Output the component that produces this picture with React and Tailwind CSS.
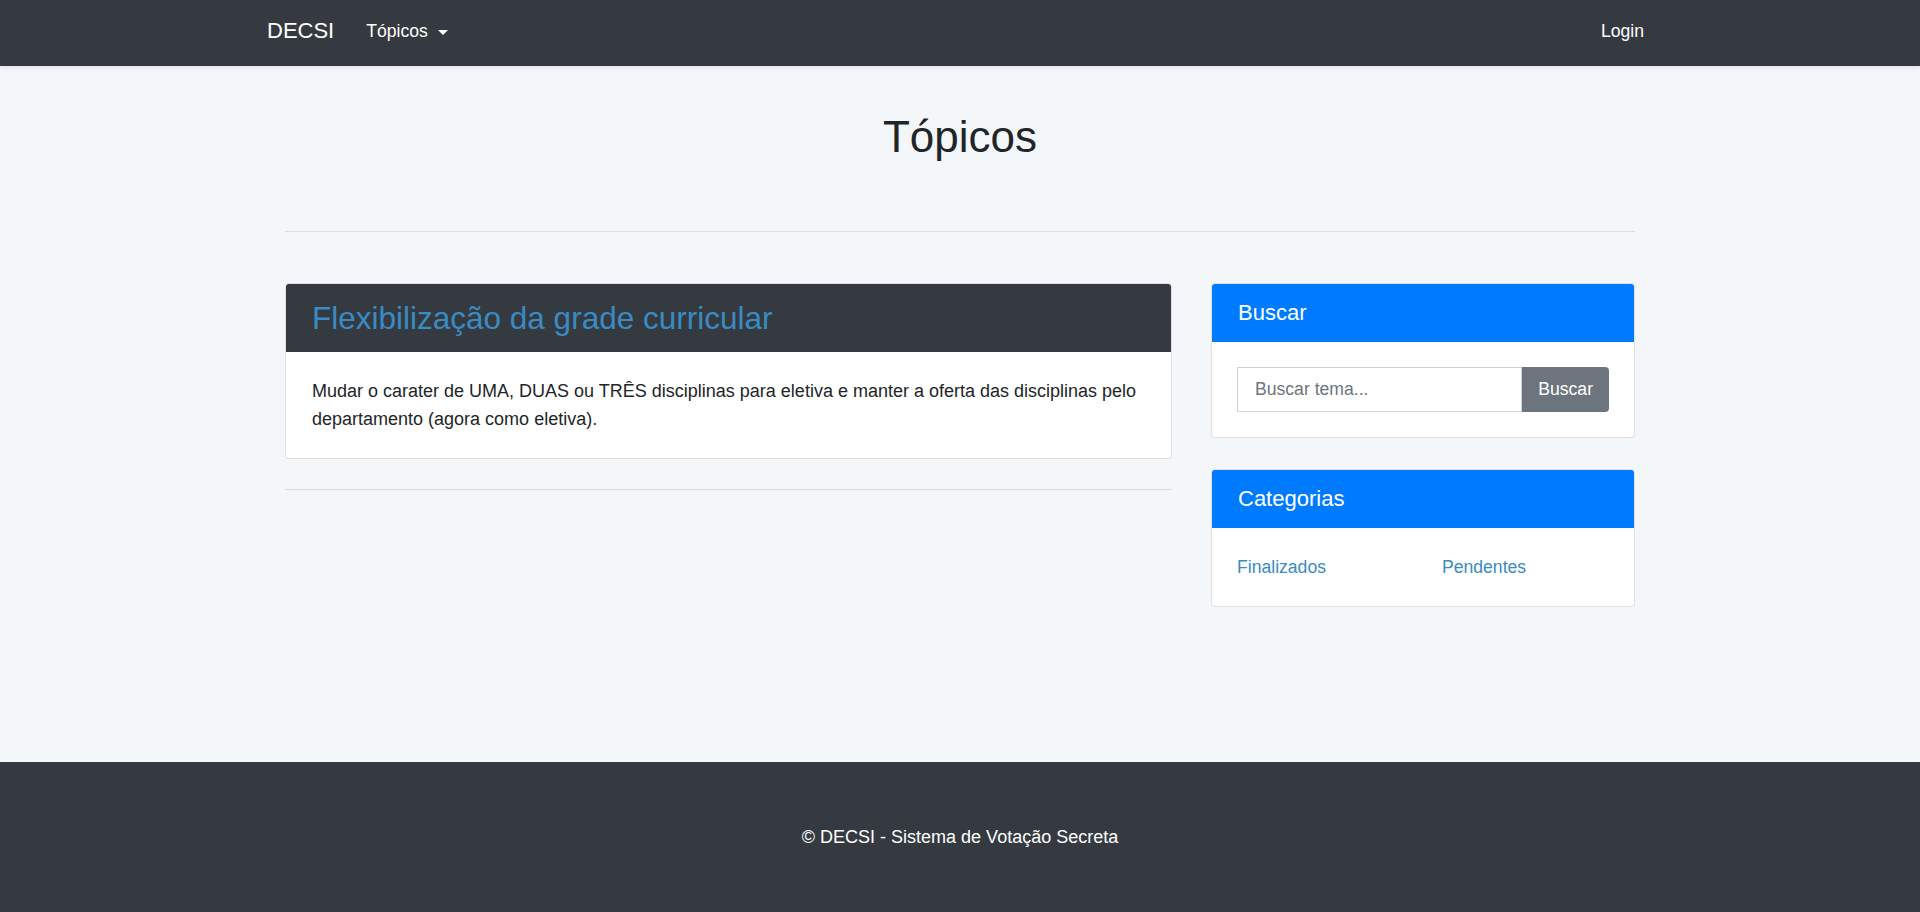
const linkColor = 'text-[#3a8bc3]'

function Navbar() {
  return (
    <nav className="h-[66px] bg-[#343a40] shadow-[0_2px_4px_rgba(0,0,0,0.08)]">
      <div className="mx-auto flex h-full w-[1386px] items-center justify-between pb-[4px]">
        <div className="flex items-center">
          <a className="mr-[23px] text-[22px] leading-[26px] text-white">DECSI</a>
          <a className="flex items-center gap-[10px] px-[9px] text-[17.6px] leading-[26px] text-white">
            Tópicos
            <span className="mt-[2px] h-0 w-0 border-x-[5px] border-t-[5px] border-x-transparent border-t-white" />
          </a>
        </div>
        <a className="px-[9px] text-[17.6px] leading-[26px] text-white">Login</a>
      </div>
    </nav>
  )
}

function SideCard({ title, children }) {
  return (
    <div className="overflow-hidden rounded-[4px] border border-black/[0.12] bg-white">
      <div className="bg-[#007bff] px-[26px] py-[16px] text-[22px] leading-[26px] text-white">{title}</div>
      <div className="px-[25px] py-[25px]">{children}</div>
    </div>
  )
}

export default function App() {
  return (
    <div className="flex min-h-screen flex-col bg-[#f4f7fa] font-['Liberation_Sans',Arial,sans-serif] text-[#212529]">
      <Navbar />

      <main className="flex-1">
        <div className="mx-auto w-[1350px]">
          <h1 className="mt-[44px] text-center text-[44px] leading-[53px] font-normal">Tópicos</h1>
          <hr className="mt-[68px] border-t border-black/10" />

          <div className="mt-[51px] grid grid-cols-[887px_424px] gap-x-[39px]">
            <section>
              <article className="overflow-hidden rounded-[4px] border border-black/[0.12] bg-white">
                <div className="bg-[#343a40] px-[26px] pt-[16px] pb-[15px]">
                  <h3 className={`text-[31.5px] leading-[37px] ${linkColor}`}>Flexibilização da grade curricular</h3>
                </div>
                <div className="px-[26px] py-[25px] text-[18px] leading-[28px]">
                  Mudar o carater de UMA, DUAS ou TRÊS disciplinas para eletiva e manter a oferta das disciplinas pelo
                  departamento (agora como eletiva).
                </div>
              </article>
              <hr className="mt-[30px] border-t border-black/10" />
            </section>

            <aside className="flex flex-col gap-[31px]">
              <SideCard title="Buscar">
                <form className="flex" onSubmit={(e) => e.preventDefault()}>
                  <input
                    className="h-[45px] flex-1 border border-[#ced4da] bg-white px-[17px] text-[17.6px] text-[#495057] outline-none placeholder:text-[#6c757d]"
                    placeholder="Buscar tema..."
                  />
                  <button className="h-[45px] rounded-r-[4px] bg-[#6c757d] px-[16px] text-[17.6px] text-white">
                    Buscar
                  </button>
                </form>
              </SideCard>

              <SideCard title="Categorias">
                <ul className="grid grid-cols-[205px_1fr] text-[17.6px] leading-[28px]">
                  <li className={linkColor}>Finalizados</li>
                  <li className={linkColor}>Pendentes</li>
                </ul>
              </SideCard>
            </aside>
          </div>
        </div>
      </main>

      <footer className="flex h-[150px] items-center justify-center bg-[#343a40]">
        <p className="text-[18px] leading-[26px] text-white">© DECSI - Sistema de Votação Secreta</p>
      </footer>
    </div>
  )
}
